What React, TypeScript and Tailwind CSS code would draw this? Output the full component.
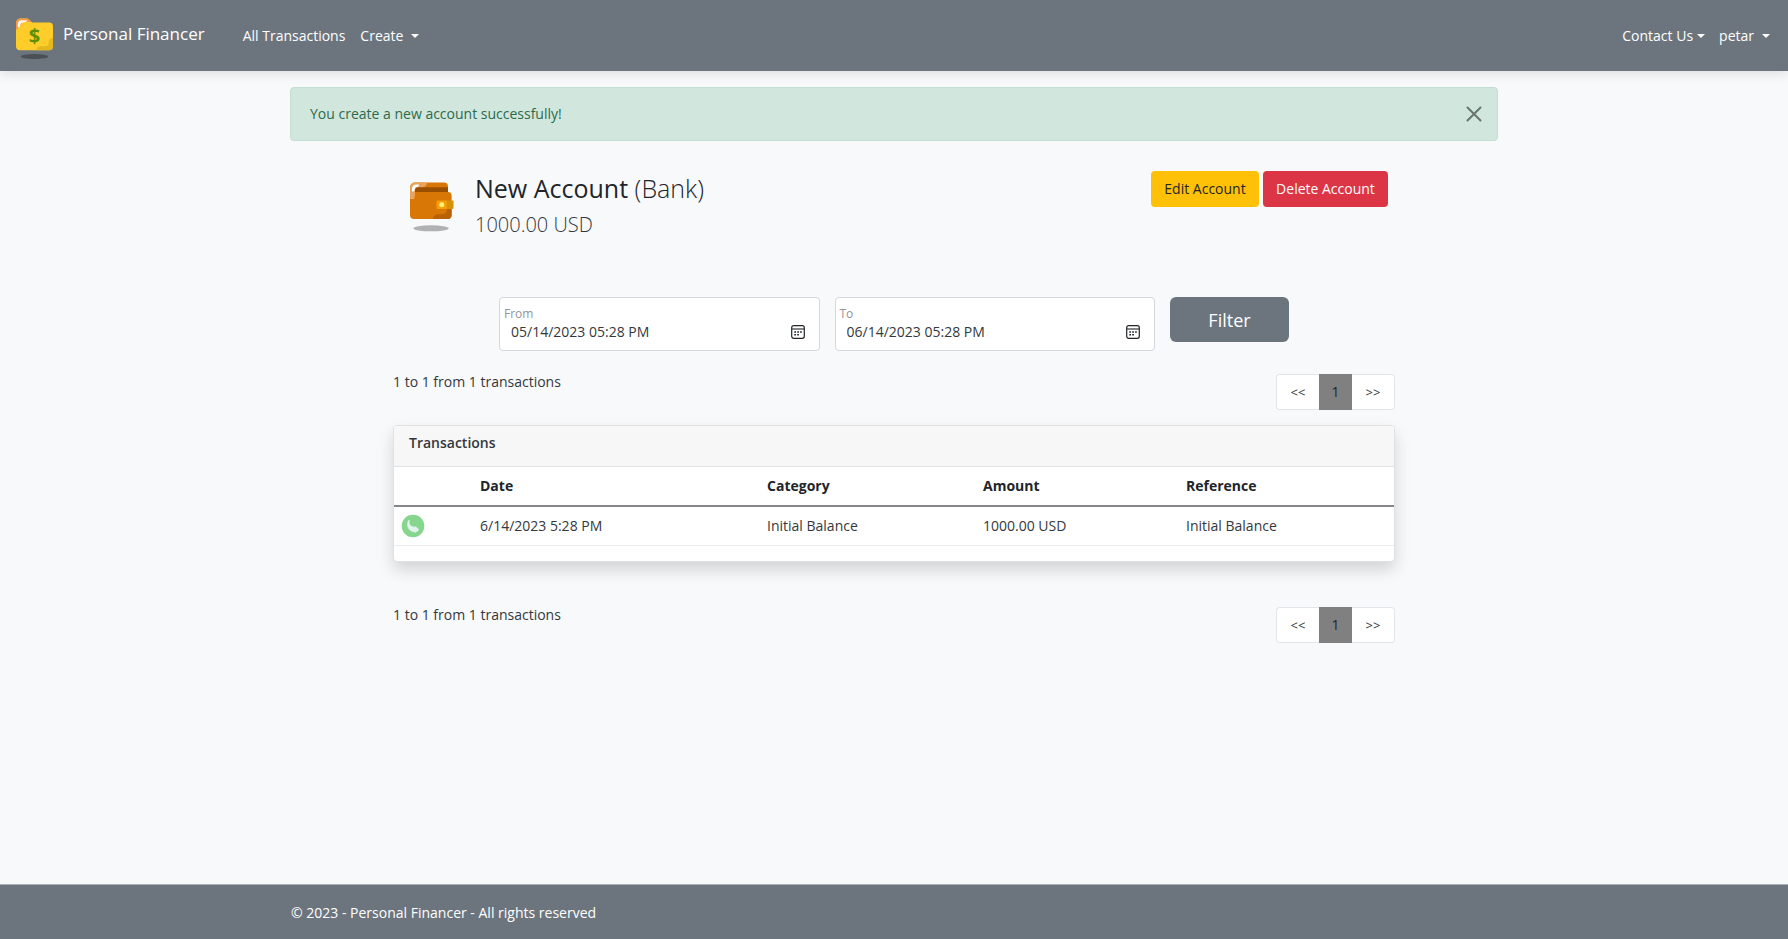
import { useState } from "react";

function FolderLogo() {
  return (
    <svg viewBox="0 0 38 42" className="h-[42px] w-[38px]" aria-hidden="true">
      <path d="M0 5a4.500 4.500 0 0 1 4.500-4.500H11c2.600 0 3.400 3.900 6 3.900h16.200A3.800 3.800 0 0 1 37 8.200v20a4 4 0 0 1-4 4H4a4 4 0 0 1-4-4z" fill="#ffcd29" />
      <path d="M0 5a4.500 4.500 0 0 1 4.500-4.500H11c2.200 0 3.200 2.700 4.800 3.600H10C4.500 4.100 5 9 1.800 10.800L0 12z" fill="#f39a45" />
      <path d="M1.800 9.600V6.200c0-2.400 1.600-3.900 4-3.900H11c0 1.500-1.600 2.100-3.400 2.300C4.600 5 4.400 7 3.900 8.400c-.3.900-1.200 1.200-2.100 1.200z" fill="#fff4e6" />
      <path d="M37 20v8.200a4 4 0 0 1-4 4H20.500c0-2.400 1.800-4 4.200-4h4.500c2.600 0 3.500-1.400 3.500-3.800 0-2.600 1.600-4.400 4.300-4.400z" fill="#e3b71f" />
      <text x="18.500" y="25" textAnchor="middle" fontSize="20" fontWeight="700" fontFamily="Open Sans, sans-serif" fill="#5f8f00">$</text>
      <ellipse cx="18.500" cy="38.500" rx="13.800" ry="2.500" fill="#4a5056" />
    </svg>
  );
}

function WalletIcon() {
  return (
    <svg viewBox="0 0 44 50" className="h-[50px] w-[44px]" aria-hidden="true">
      <path d="M0 5.500A5 5 0 0 1 5 .500h29a4 4 0 0 1 4 4V12H0z" fill="#d97706" />
      <path d="M0 5.500A5 5 0 0 1 5 .500h12c0 3-2 4.600-5 4.800-4 .300-5.200 1.500-5.400 5.700-.200 4-2.600 6-6.600 6z" fill="#e9a35a" />
      <path d="M2 9.500V6.600c0-2.500 1.700-4.200 4.200-4.200H9c0 1.900-1.200 2.500-2.700 2.900C5 5.700 5 7 4.600 8.200c-.3 1-1.300 1.400-2.600 1.300z" fill="#fff" />
      <path d="M5 8.500a3.200 3.200 0 0 1 3.200-3.200H38V12H5z" fill="#9a4f00" />
      <path d="M5 10h33a3.600 3.600 0 0 1 3.600 3.600V33a4 4 0 0 1-4 4H4a4 4 0 0 1-4-4V17h2c2 0 3-2 3-4z" fill="#d97706" />
      <path d="M41.600 26v7a4 4 0 0 1-4 4H23c0-3 2-4.800 5-4.800h4c3.500 0 5-1.700 5-6.200z" fill="#b96205" />
      <rect x="26.500" y="18.500" width="11" height="8.500" rx="1" fill="#f59e0b" />
      <path d="M36.800 18.500h5.700a1 1 0 0 1 1 1V26a1 1 0 0 1-1 1h-5.700z" fill="#d99208" />
      <circle cx="31.800" cy="22.700" r="2.500" fill="#fff176" />
      <ellipse cx="21" cy="46.300" rx="17.800" ry="3" fill="#b0b1b3" />
    </svg>
  );
}

function IncomeIcon() {
  return (
    <svg viewBox="0 0 24 24" className="block size-6" role="img" aria-label="Income">
      <circle cx="12" cy="12" r="11.300" fill="#86d68e" />
      <path d="M8.300 6.300c-1 3.400.6 6.300 5 6.900.8.100 1.200-.8 1.900-.2l2 2.200c.5.600.3 1.100-.3 1.500l-2.600 1.500c-.8.400-1-.5-1.700-.6C7.600 16.700 5.300 12 7.400 6.700z" fill="#e3f4f0" stroke="#e3f4f0" strokeWidth=".8" strokeLinejoin="round" />
    </svg>
  );
}

function CalendarIcon() {
  return (
    <svg viewBox="0 0 14 14" className="size-[14px]" fill="none" stroke="#212529" aria-hidden="true">
      <rect x=".7" y=".7" width="12.600" height="12.600" rx="2" strokeWidth="1.200" />
      <path d="M1 4h12" strokeWidth="1.100" />
      <path d="M3.300 7h7.500M3.300 9.800h4.700" strokeWidth="1.600" strokeDasharray="1.700 1.200" />
    </svg>
  );
}

function Caret() {
  return <span className="border-x-4 border-t-4 border-x-transparent border-t-current" aria-hidden="true" />;
}

function DateField({ id, label, value }: { id: string; label: string; value: string }) {
  const [text, setText] = useState(value);
  return (
    <div className="flex h-[54px] flex-1 flex-col justify-center rounded border border-[#d3d8dd] bg-white pr-[14px] pl-1">
      <label htmlFor={id} className="text-[12px] leading-4 text-[#91959a]">
        {label}
      </label>
      <div className="flex items-center pl-[7px]">
        <input
          id={id}
          type="text"
          value={text}
          onChange={(e) => setText(e.target.value)}
          className="h-5 min-w-0 flex-1 bg-transparent text-[14px] leading-5 text-[#33383d] outline-none"
        />
        <button type="button" aria-label={`Pick ${label} date`}>
          <CalendarIcon />
        </button>
      </div>
    </div>
  );
}

function Pager() {
  return (
    <div className="flex items-start justify-between">
      <p className="leading-4">1 to 1 from 1 transactions</p>
      <nav aria-label="Pages" className="flex h-9">
        <button type="button" className="w-[43px] rounded-l border border-r-0 border-[#e3e6e9] bg-white text-[13px]">
          &lt;&lt;
        </button>
        <button type="button" aria-current="page" className="w-[33px] bg-[#808080] text-[#212529]">
          1
        </button>
        <button type="button" className="w-[43px] rounded-r border border-l-0 border-[#e3e6e9] bg-white text-[13px]">
          &gt;&gt;
        </button>
      </nav>
    </div>
  );
}

const rows = [
  { date: "6/14/2023 5:28 PM", category: "Initial Balance", amount: "1000.00 USD", reference: "Initial Balance" },
];

export default function App() {
  const [alertOpen, setAlertOpen] = useState(true);
  return (
    <div className="flex min-h-screen flex-col bg-[#f8f9fb] font-['Open_Sans',sans-serif] text-[14px] leading-[22px] text-[#33383d]">
      <header className="flex h-[71px] items-center bg-[#6c757d] pr-[18px] pl-4 text-white shadow-[0_2px_12px_rgba(0,0,0,0.12)]">
        <a href="#home" className="flex items-center gap-[9px]">
          <span className="pt-[6px]">
            <FolderLogo />
          </span>
          <span className="pb-1 text-[17px] leading-6">Personal Financer</span>
        </a>
        <nav className="flex flex-1 items-center justify-between pl-[38px]" aria-label="Main">
          <div className="flex items-center gap-[15px]">
            <a href="#transactions">All Transactions</a>
            <button type="button" className="flex items-center gap-2">
              Create <Caret />
            </button>
          </div>
          <div className="flex items-center gap-[14px]">
            <button type="button" className="flex items-center gap-1">
              Contact Us <Caret />
            </button>
            <button type="button" className="flex items-center gap-2">
              petar <Caret />
            </button>
          </div>
        </nav>
      </header>

      <main className="mx-auto w-full max-w-[1208px] flex-1 pt-4">
        {alertOpen && (
          <div role="alert" className="flex h-[54px] items-center justify-between rounded border border-[#c1ded0] bg-[#d1e7dd] pr-[15px] pl-[19px] text-[#2c6a4c]">
            <span>You create a new account successfully!</span>
            <button type="button" aria-label="Close" onClick={() => setAlertOpen(false)}>
              <svg viewBox="0 0 16 16" className="size-4" stroke="#68746f" strokeWidth="2" strokeLinecap="round" aria-hidden="true">
                <path d="M1.500 1.500l13 13M14.500 1.500l-13 13" />
              </svg>
            </button>
          </div>
        )}

        <div className="mx-auto max-w-[1002px] pt-[30px] pb-10">
          <section className="flex items-start pr-[7px] pl-[17px]">
            <span className="pt-[11px]">
              <WalletIcon />
            </span>
            <div className="flex-1 pl-[21px]">
              <h1 className="text-[25px] leading-[34px] text-[#212529]">
                New Account <span className="font-light">(Bank)</span>
              </h1>
              <p className="text-[20px] leading-10 font-light">1000.00 USD</p>
            </div>
            <div className="flex gap-1">
              <a href="#edit" className="flex h-9 w-[108px] items-center justify-center rounded bg-[#ffc107] text-[#212529]">
                Edit Account
              </a>
              <button type="button" className="h-9 w-[125px] rounded bg-[#dc3545] text-white">
                Delete Account
              </button>
            </div>
          </section>

          <form className="mx-auto mt-[52px] flex max-w-[790px] items-start gap-[15px]" onSubmit={(e) => e.preventDefault()}>
            <DateField id="from" label="From" value="05/14/2023 05:28 PM" />
            <DateField id="to" label="To" value="06/14/2023 05:28 PM" />
            <button type="submit" className="h-[45px] w-[119px] rounded-md bg-[#6c757d] text-[18px] text-white">
              Filter
            </button>
          </form>

          <div className="mt-[23px]">
            <Pager />
          </div>

          <section className="mt-[15px] mb-[45px] overflow-hidden rounded border border-[#dfe1e3] bg-white pb-[15px] shadow-[0_8px_16px_rgba(0,0,0,0.15)]">
            <h2 className="h-[41px] border-b border-[#dfe1e3] bg-[#f7f7f7] px-[15px] pt-[6px] font-semibold">Transactions</h2>
            <table className="w-full table-fixed text-left">
              <thead className="border-b-2 border-[#85878a] text-[#212529]">
                <tr className="h-[39px]">
                  <th scope="col" className="w-[8%]" aria-label="Type" />
                  <th scope="col" className="w-[28.700%] px-[6px] font-bold">Date</th>
                  <th scope="col" className="w-[21.600%] px-[6px] font-bold">Category</th>
                  <th scope="col" className="w-[20.300%] px-[6px] font-bold">Amount</th>
                  <th scope="col" className="px-[6px] font-bold">Reference</th>
                </tr>
              </thead>
              <tbody>
                {rows.map((row) => (
                  <tr key={row.date} className="h-[39px] border-b border-[#e9ebed]">
                    <td className="px-[7px]">
                      <IncomeIcon />
                    </td>
                    <td className="px-[6px]">{row.date}</td>
                    <td className="px-[6px]">{row.category}</td>
                    <td className="px-[6px]">{row.amount}</td>
                    <td className="px-[6px]">{row.reference}</td>
                  </tr>
                ))}
              </tbody>
            </table>
          </section>

          <Pager />
        </div>
      </main>

      <footer className="h-[55px] border-t border-[#a9aeb3] bg-[#6c757d] text-white">
        <p className="mx-auto max-w-[1208px] px-px leading-[56px]">© 2023 - Personal Financer - All rights reserved</p>
      </footer>
    </div>
  );
}
